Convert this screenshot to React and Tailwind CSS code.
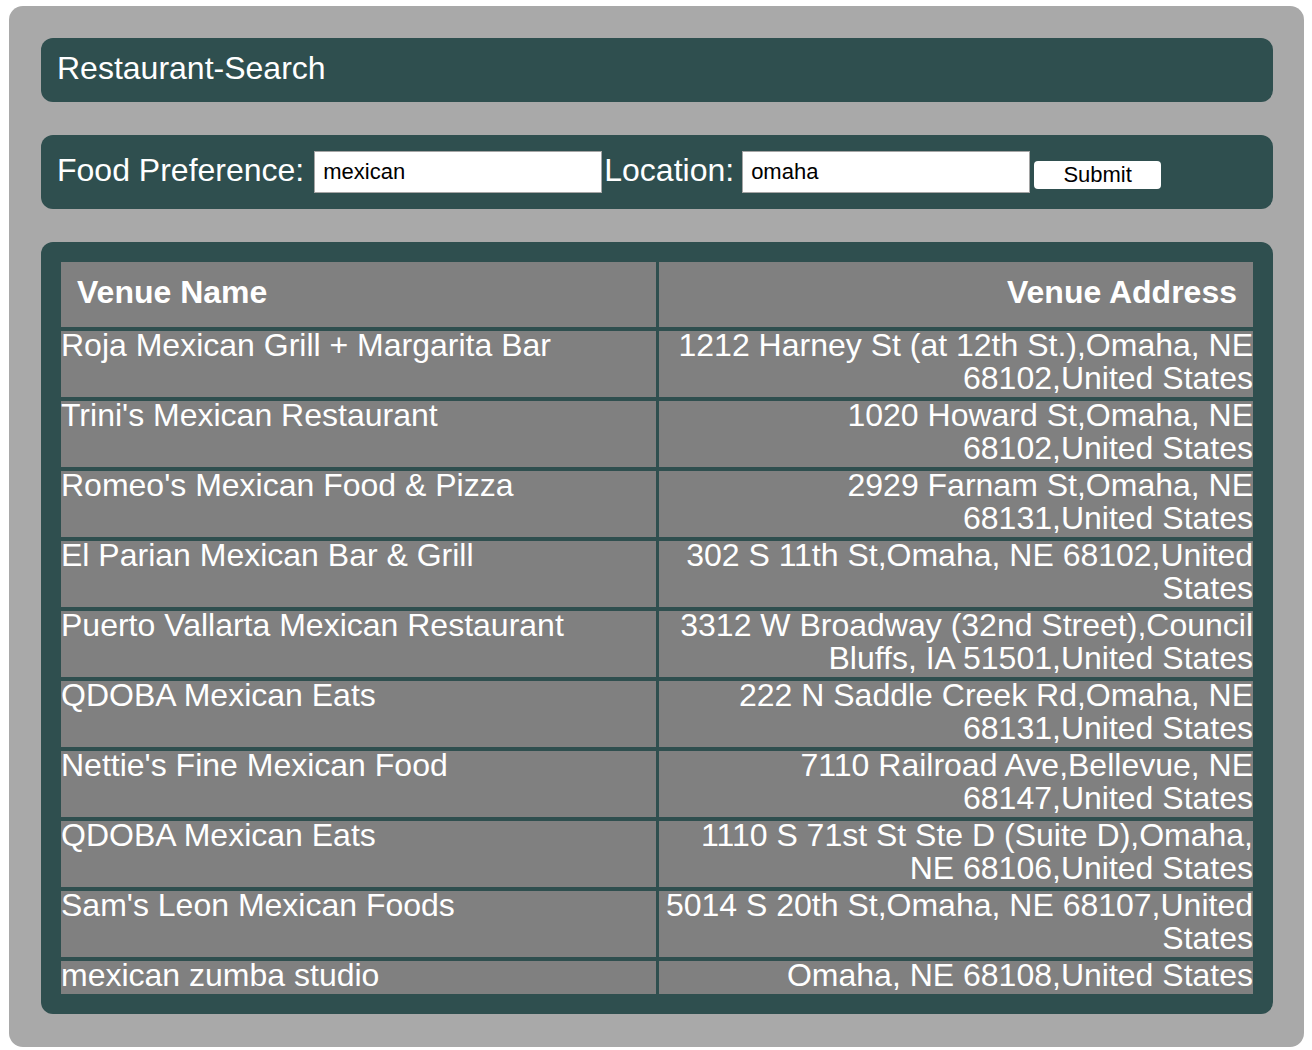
import React from "react";

const venues = [
  ["Roja Mexican Grill + Margarita Bar", "1212 Harney St (at 12th St.),Omaha, NE 68102,United States"],
  ["Trini's Mexican Restaurant", "1020 Howard St,Omaha, NE 68102,United States"],
  ["Romeo's Mexican Food & Pizza", "2929 Farnam St,Omaha, NE 68131,United States"],
  ["El Parian Mexican Bar & Grill", "302 S 11th St,Omaha, NE 68102,United States"],
  ["Puerto Vallarta Mexican Restaurant", "3312 W Broadway (32nd Street),Council Bluffs, IA 51501,United States"],
  ["QDOBA Mexican Eats", "222 N Saddle Creek Rd,Omaha, NE 68131,United States"],
  ["Nettie's Fine Mexican Food", "7110 Railroad Ave,Bellevue, NE 68147,United States"],
  ["QDOBA Mexican Eats", "1110 S 71st St Ste D (Suite D),Omaha, NE 68106,United States"],
  ["Sam's Leon Mexican Foods", "5014 S 20th St,Omaha, NE 68107,United States"],
  ["mexican zumba studio", "Omaha, NE 68108,United States"],
];

function SearchForm() {
  return (
    <form
      className="flex items-center rounded-xl bg-[#2f4f4f] px-4 py-4 text-white"
      onSubmit={(e) => e.preventDefault()}
    >
      <label className="mb-[4px] mr-[10px]">Food Preference:</label>
      <input
        defaultValue="mexican"
        className="h-[42px] w-[288px] border border-[#a5a5a5] bg-white px-2 text-[22px] leading-none text-black outline-none"
      />
      <label className="mb-[4px] ml-[2px] mr-[8px]">Location:</label>
      <input
        defaultValue="omaha"
        className="h-[42px] w-[288px] border border-[#a5a5a5] bg-white px-2 text-[22px] leading-none text-black outline-none"
      />
      <button
        type="submit"
        className="ml-[4px] mt-[5px] h-[28px] w-[127px] rounded-[4px] bg-white text-[22px] leading-none text-black"
      >
        Submit
      </button>
    </form>
  );
}

export default function App() {
  return (
    <div className="bg-white pl-[9px] pr-[8px] pt-[6px] pb-[4px] font-['Liberation_Sans',Arial,sans-serif] text-[32px] leading-[33px]">
      <div className="flex flex-col gap-[33px] rounded-[14px] bg-[#a9a9a9] pl-8 pr-[31px] pt-8 pb-[33px]">
        <header className="rounded-xl bg-[#2f4f4f] px-4 pt-[13px] pb-[17px] leading-[34px] text-white">
          Restaurant-Search
        </header>

        <SearchForm />

        <section className="rounded-xl bg-[#2f4f4f] px-[17px] py-4">
          <table className="w-full table-fixed border-separate border-spacing-x-[3px] border-spacing-y-[4px] text-white">
            <thead>
              <tr>
                <th className="bg-[#808080] px-4 pt-[14px] pb-[18px] text-left font-bold">Venue Name</th>
                <th className="bg-[#808080] px-4 pt-[14px] pb-[18px] text-right font-bold">Venue Address</th>
              </tr>
            </thead>
            <tbody>
              {venues.map(([name, address], i) => (
                <tr key={i}>
                  <td className="bg-[#808080] p-0 align-top">
                    <div className="-mt-[2px] mb-[2px]">{name}</div>
                  </td>
                  <td className="bg-[#808080] p-0 text-right align-top">
                    <div className="-mt-[2px] mb-[2px]">{address}</div>
                  </td>
                </tr>
              ))}
            </tbody>
          </table>
        </section>
      </div>
    </div>
  );
}
